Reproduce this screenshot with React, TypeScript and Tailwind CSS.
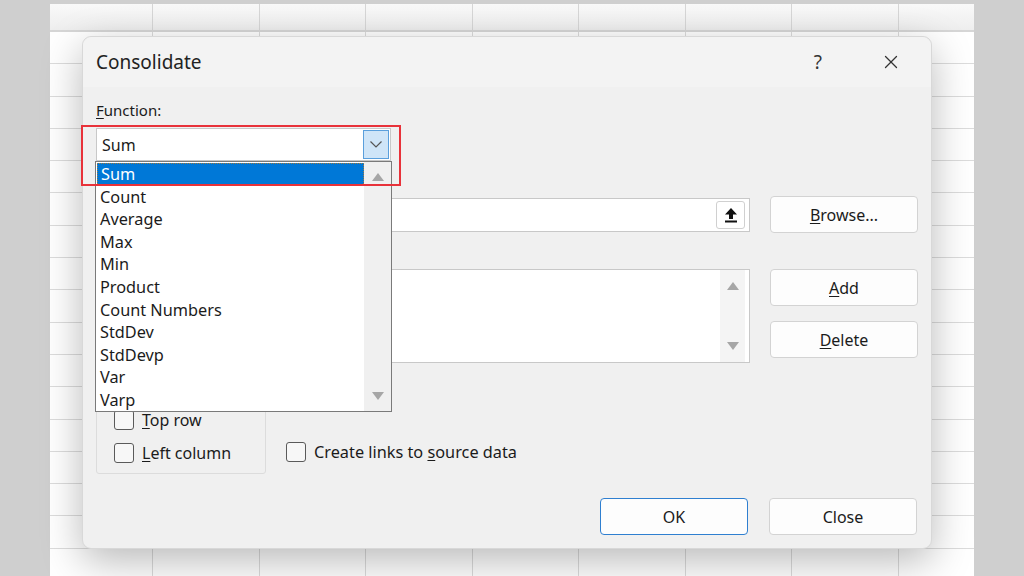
import { X } from "lucide-react"

const functions = [
  "Sum",
  "Count",
  "Average",
  "Max",
  "Min",
  "Product",
  "Count Numbers",
  "StdDev",
  "StdDevp",
  "Var",
  "Varp",
]

function TriUp({ className = "" }: { className?: string }) {
  return (
    <svg width="12" height="8" viewBox="0 0 12 8" className={className}>
      <path d="M6 0 L12 8 L0 8 Z" fill="#a6a6a6" />
    </svg>
  )
}

function TriDown({ className = "" }: { className?: string }) {
  return (
    <svg width="12" height="8" viewBox="0 0 12 8" className={className}>
      <path d="M0 0 L12 0 L6 8 Z" fill="#a6a6a6" />
    </svg>
  )
}

function Checkbox() {
  return <div className="h-[20px] w-[20px] shrink-0 rounded-[3px] border border-[#5a5a5a] bg-[#f7f7f7]" />
}

function Button({ children, primary = false }: { children: React.ReactNode; primary?: boolean }) {
  return (
    <div
      className={
        primary
          ? "flex h-[37px] w-[148px] items-center justify-center rounded-[4px] border-[1.5px] border-[#2f7fd0] bg-[#fdfdfd] text-[16px] text-[#1b1b1b]"
          : "flex h-[37px] w-[148px] items-center justify-center rounded-[4px] border border-[#d3d3d3] bg-[#fdfdfd] text-[16px] text-[#1b1b1b]"
      }
    >
      {children}
    </div>
  )
}

export default function App() {
  return (
    <div
      className="relative h-[576px] w-[1024px] overflow-hidden bg-[#cfcfcf] pl-[50px] pt-[4px]"
      style={{ fontFamily: '"Noto Sans", "Open Sans", sans-serif' }}
    >
      {/* spreadsheet behind the dialog */}
      <div className="grid h-[572px] w-[924px] grid-cols-[103px_repeat(8,106.5px)] grid-rows-[28px_repeat(17,32.3px)] overflow-hidden bg-white">
        {Array.from({ length: 9 * 18 }).map((_, i) => (
          <div
            key={i}
            className={
              i < 9
                ? "border-b-2 border-r border-[#d6d6d6] bg-gradient-to-b from-[#f9f9f9] to-[#eeeeee]"
                : "border-b border-r border-[#dcdcdc]"
            }
          />
        ))}
      </div>

      {/* Consolidate dialog */}
      <div className="absolute left-[82px] top-[36px] flex h-[513px] w-[850px] flex-col rounded-[9px] border border-[#d8d8d8] bg-[#f0f0f0] text-[#1b1b1b] shadow-[0_12px_40px_rgba(0,0,0,0.28)]">
        <div className="flex h-[50px] items-center rounded-t-[9px] bg-[#f3f3f3] pl-[13px]">
          <span className="text-[19px] text-[#222]">Consolidate</span>
          <span className="ml-auto mr-[58px] text-[19px] text-[#333]">?</span>
          <X className="mr-[29px] h-[22px] w-[22px] text-[#333]" strokeWidth={1.4} />
        </div>

        <div className="flex flex-1 flex-col px-[13px]">
          <div className="mt-[13px] h-[20px] text-[15px] leading-[20px]">
            <span className="underline underline-offset-2">F</span>unction:
          </div>

          {/* combo box */}
          <div className="mt-[8px] flex h-[33px] w-[295px] items-center border border-[#c8c8c8] bg-white">
            <span className="pl-[5px] text-[16px]">Sum</span>
            <div className="ml-auto mr-[1px] flex h-[29px] w-[26px] items-center justify-center border border-[#5a9fdc] bg-[#cfe5f8]">
              <svg width="12" height="7" viewBox="0 0 12 7">
                <path d="M0.5 0.5 L6 6 L11.5 0.5" fill="none" stroke="#555" strokeWidth="1.2" />
              </svg>
            </div>
          </div>

          {/* reference row */}
          <div className="mt-[35px] flex items-center">
            <div className="flex h-[34px] w-[655px] items-center justify-end border border-[#c8c8c8] bg-white pr-[4px]">
              <div className="flex h-[28px] w-[29px] items-center justify-center rounded-[3px] border border-[#d0d0d0] bg-white">
                <svg width="14" height="16" viewBox="0 0 14 16">
                  <path d="M7 1 L13 7.5 L9 7.5 L9 12 L5 12 L5 7.5 L1 7.5 Z" fill="#111" />
                  <rect x="1" y="13.5" width="12" height="2" fill="#111" />
                </svg>
              </div>
            </div>
            <div className="ml-[20px]">
              <Button>
                <span>
                  <span className="underline underline-offset-2">B</span>rowse...
                </span>
              </Button>
            </div>
          </div>

          {/* references list */}
          <div className="mt-[36px] flex">
            <div className="flex h-[94px] w-[655px] border border-[#c8c8c8] bg-white">
              <div className="ml-auto mr-[4px] flex w-[25px] flex-col items-center justify-between bg-[#f4f4f4] py-[12px]">
                <TriUp />
                <TriDown />
              </div>
            </div>
            <div className="ml-[20px] flex flex-col gap-[15px]">
              <Button>
                <span>
                  <span className="underline underline-offset-2">A</span>dd
                </span>
              </Button>
              <Button>
                <span>
                  <span className="underline underline-offset-2">D</span>elete
                </span>
              </Button>
            </div>
          </div>

          {/* labels group */}
          <div className="mt-[17px] flex items-end">
            <div className="h-[94px] w-[170px] rounded-[3px] border border-[#dcdcdc] pl-[17px] pt-[27px]">
              <div className="flex items-center gap-[8px] text-[16px]">
                <Checkbox />
                <span>
                  <span className="underline underline-offset-2">T</span>op row
                </span>
              </div>
              <div className="mt-[9px] flex items-center gap-[8px] text-[16px]">
                <Checkbox />
                <span>
                  <span className="underline underline-offset-2">L</span>eft column
                </span>
              </div>
            </div>
            <div className="mb-[10px] ml-[20px] flex items-center gap-[8px] text-[16.3px]">
              <Checkbox />
              <span>
                Create links to <span className="underline underline-offset-2">s</span>ource data
              </span>
            </div>
          </div>

          <div className="mb-[13px] mt-auto flex justify-end gap-[21px] pr-[1px]">
            <Button primary>OK</Button>
            <Button>Close</Button>
          </div>
        </div>

        {/* open function list */}
        <div className="absolute left-[12px] top-[124px] flex h-[251px] w-[297px] border border-[#7a7a7a] bg-white">
          <div className="flex flex-1 flex-col pt-[1px]">
            {functions.map((f, i) => (
              <div
                key={f}
                className={
                  i === 0
                    ? "ml-[1px] flex h-[22.6px] items-center border border-dotted border-[#a07a40] bg-[#0078d7] pl-[3px] text-[16.3px] text-white"
                    : "flex h-[22.6px] items-center pl-[4px] text-[16.3px] text-[#1b1b1b]"
                }
              >
                {f}
              </div>
            ))}
          </div>
          <div className="flex w-[27px] flex-col items-center justify-between bg-[#f0f0f0] py-[11px]">
            <TriUp />
            <TriDown />
          </div>
        </div>
      </div>

      {/* red highlight frame */}
      <div className="pointer-events-none absolute left-[81px] top-[125px] h-[61px] w-[320px] border-2 border-[#e8323a]" />
    </div>
  )
}
